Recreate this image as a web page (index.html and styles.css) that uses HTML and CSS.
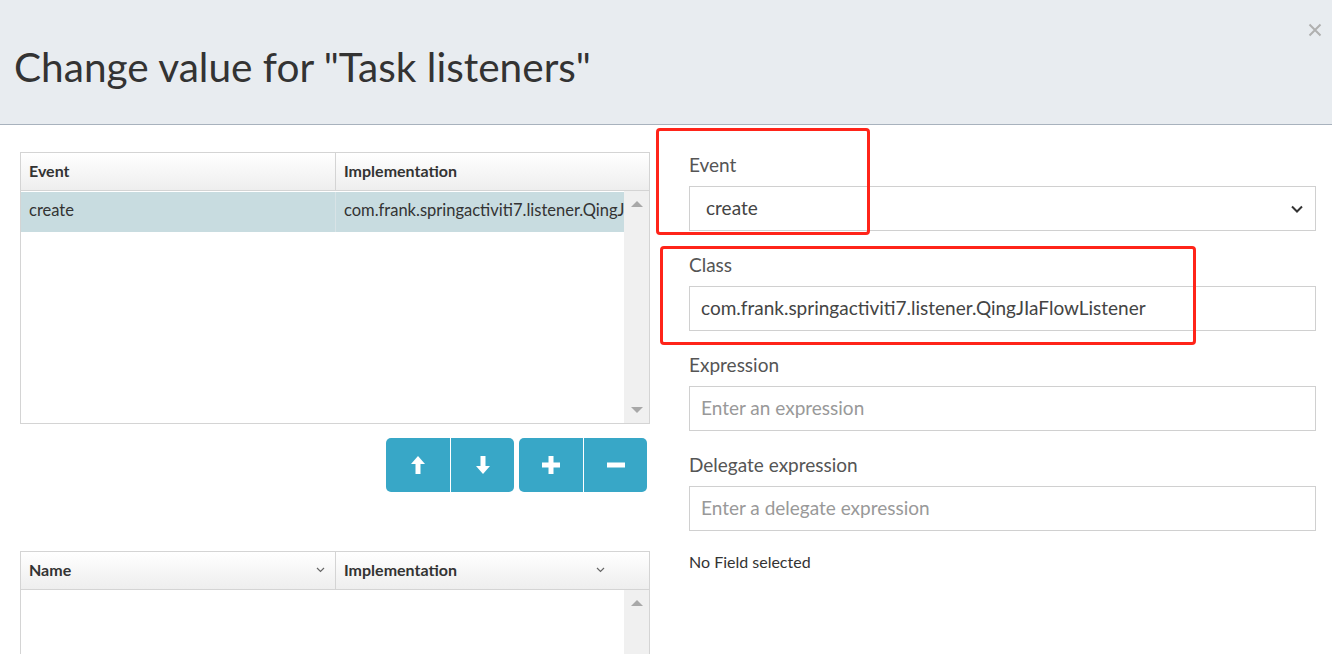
FILE: index.html
```html
<!DOCTYPE html>
<html>
<head>
<meta charset="utf-8">
<link rel="stylesheet" href="styles.css">
</head>
<body>
<div class="modal">
  <div class="modal-header">
    <h2 class="title">Change value for "Task listeners"</h2>
    <button class="close" aria-label="close">
      <svg width="14" height="14" viewBox="0 0 14 14"><path d="M1.5 1.5L12.5 12.5M12.5 1.5L1.5 12.5" stroke="#b0b0b0" stroke-width="2"/></svg>
    </button>
  </div>
  <div class="modal-body">
    <div class="left-col">
      <div class="grid grid-top">
        <div class="grid-head">
          <div class="hcell c1">Event</div>
          <div class="hcell c2">Implementation</div>
        </div>
        <div class="grid-body">
          <div class="rows">
            <div class="row selected">
              <div class="cell c1">create</div>
              <div class="cell c2">com.frank.springactiviti7.listener.QingJIaFlowListener</div>
            </div>
          </div>
          <div class="scrollbar">
            <span class="tri up"></span>
            <span class="tri down"></span>
          </div>
        </div>
      </div>
      <div class="btn-bar">
        <div class="btn-group">
          <button class="btn"><svg width="14" height="18" viewBox="0 0 14 18"><path d="M7 0L14 8H9.5V18H4.5V8H0Z" fill="#fff"/></svg></button>
          <button class="btn"><svg width="14" height="18" viewBox="0 0 14 18"><path d="M7 18L14 10H9.5V0H4.5V10H0Z" fill="#fff"/></svg></button>
        </div>
        <div class="btn-group">
          <button class="btn"><svg width="18" height="18" viewBox="0 0 18 18"><path d="M6.5 0H11.5V6.5H18V11.5H11.5V18H6.5V11.5H0V6.5H6.5Z" fill="#fff"/></svg></button>
          <button class="btn"><svg width="18" height="18" viewBox="0 0 18 18"><path d="M0 6.5H18V11.5H0Z" fill="#fff"/></svg></button>
        </div>
      </div>
      <div class="grid grid-bottom">
        <div class="grid-head">
          <div class="hcell c1">Name<svg class="chev" width="9" height="6" viewBox="0 0 9 6"><path d="M1 1L4.5 4.5L8 1" stroke="#666" stroke-width="1.2" fill="none"/></svg></div>
          <div class="hcell c2">Implementation<svg class="chev" width="9" height="6" viewBox="0 0 9 6"><path d="M1 1L4.5 4.5L8 1" stroke="#666" stroke-width="1.2" fill="none"/></svg></div>
        </div>
        <div class="grid-body">
          <div class="rows"></div>
          <div class="scrollbar">
            <span class="tri up"></span>
          </div>
        </div>
      </div>
    </div>
    <div class="right-col">
      <div class="form-group">
        <label class="label">Event</label>
        <div class="select">
          <span>create</span>
          <svg width="12" height="8" viewBox="0 0 12 8"><path d="M1 1.5L6 6.5L11 1.5" stroke="#333" stroke-width="2" fill="none"/></svg>
        </div>
      </div>
      <div class="form-group">
        <label class="label">Class</label>
        <div class="input">com.frank.springactiviti7.listener.QingJIaFlowListener</div>
      </div>
      <div class="form-group">
        <label class="label">Expression</label>
        <div class="input placeholder">Enter an expression</div>
      </div>
      <div class="form-group">
        <label class="label">Delegate expression</label>
        <div class="input placeholder">Enter a delegate expression</div>
      </div>
      <div class="no-field">No Field selected</div>
    </div>
  </div>
  <div class="mark mark-1"></div>
  <div class="mark mark-2"></div>
</div>
</body>
</html>
```

FILE: styles.css
```css
* { box-sizing: border-box; }
html, body { margin: 0; padding: 0; background: #fff; }
body {
  font-family: Lato, "Open Sans", "Liberation Sans", sans-serif;
  color: #333;
  width: 1332px;
  height: 654px;
  overflow: hidden;
}
.modal { position: relative; }
.modal-header {
  height: 125px;
  background: #e8ecf0;
  border-bottom: 1px solid #a8b2bd;
  display: flex;
  align-items: flex-start;
  justify-content: space-between;
  padding: 0 10px 0 14px;
}
.title {
  margin: 42px 0 0 0;
  font-size: 40.6px;
  font-weight: 400;
  line-height: 50px;
  color: #333;
  letter-spacing: 0;
}
.close {
  margin-top: 23px;
  background: none;
  border: none;
  padding: 0;
  width: 14px;
  height: 14px;
}
.close svg { display: block; }
.modal-body {
  display: flex;
  padding: 0 16px 0 20px;
  gap: 39px;
}
.left-col {
  width: 630px;
  flex: none;
  padding-top: 27px;
}
.right-col {
  flex: 1;
  padding-top: 29px;
}
.grid {
  border: 1px solid #d4d4d4;
}
.grid-top { height: 272px; display: flex; flex-direction: column; }
.grid-bottom { height: 120px; display: flex; flex-direction: column; border-bottom: none; margin-top: -1px; }
.grid-head {
  display: flex;
  height: 38px;
  background: linear-gradient(#ffffff, #eeeeee);
  border-bottom: 1px solid #d4d4d4;
  flex: none;
}
.hcell {
  display: flex;
  align-items: center;
  justify-content: space-between;
  font-weight: 700;
  color: #333;
  padding: 0 8px 3px;
  font-size: 16px;
}
.hcell .chev { margin-right: 2px; margin-top: 2px; }
.hcell.c1 { width: 315px; border-right: 1px solid #d4d4d4; }
.hcell.c2 { flex: 1; padding-right: 42px; }
.grid-body { flex: 1; display: flex; min-height: 0; }
.rows { flex: 1; padding-top: 1px; }
.row { display: flex; height: 40px; }
.row.selected { background: #c8dce0; }
.cell {
  display: flex;
  align-items: center;
  padding: 0 8px 5px;
  white-space: nowrap;
  overflow: hidden;
  color: #333;
  font-size: 16.5px;
}
.cell.c1 { width: 315px; border-right: 1px solid #d8e3e6; }
.cell.c2 { flex: 1; width: 0; }
.scrollbar {
  width: 25px;
  flex: none;
  background: #f0f0f0;
  display: flex;
  flex-direction: column;
  justify-content: space-between;
  align-items: center;
  padding: 10px 0 10px;
}
.tri { width: 0; height: 0; border-left: 6px solid transparent; border-right: 6px solid transparent; }
.tri.up { border-bottom: 6px solid #a8a8a8; }
.tri.down { border-top: 6px solid #a8a8a8; }
.btn-bar {
  display: flex;
  justify-content: flex-end;
  gap: 5px;
  padding-right: 3px;
  margin-top: 14px;
  margin-bottom: 60px;
}
.btn-group { display: flex; border-radius: 5px; overflow: hidden; }
.btn {
  width: 64px;
  height: 54px;
  background: #38a7c7;
  border: none;
  padding: 0;
  display: flex;
  align-items: center;
  justify-content: center;
}
.btn + .btn { border-left: 1px solid #fff; }
.form-group { margin-bottom: 23px; }
.label {
  display: block;
  font-size: 19px;
  line-height: 22px;
  color: #555;
  margin-bottom: 10px;
}
.select, .input {
  height: 45px;
  border: 1px solid #d0d0d0;
  display: flex;
  align-items: center;
  font-size: 19px;
  color: #444;
  padding: 0 12px 2px 11px;
}
.select { justify-content: space-between; padding-left: 16px; }
.select svg { margin-top: 2px; }
.placeholder { color: #999; }
.no-field {
  font-size: 16px;
  color: #333;
  margin-top: -2px;
  line-height: 20px;
}
.mark {
  position: absolute;
  border: 3px solid #ff2419;
  border-radius: 4px;
}
.mark-1 { left: 656px; top: 128px; width: 214px; height: 107px; }
.mark-2 { left: 660px; top: 246px; width: 536px; height: 99px; }
```
